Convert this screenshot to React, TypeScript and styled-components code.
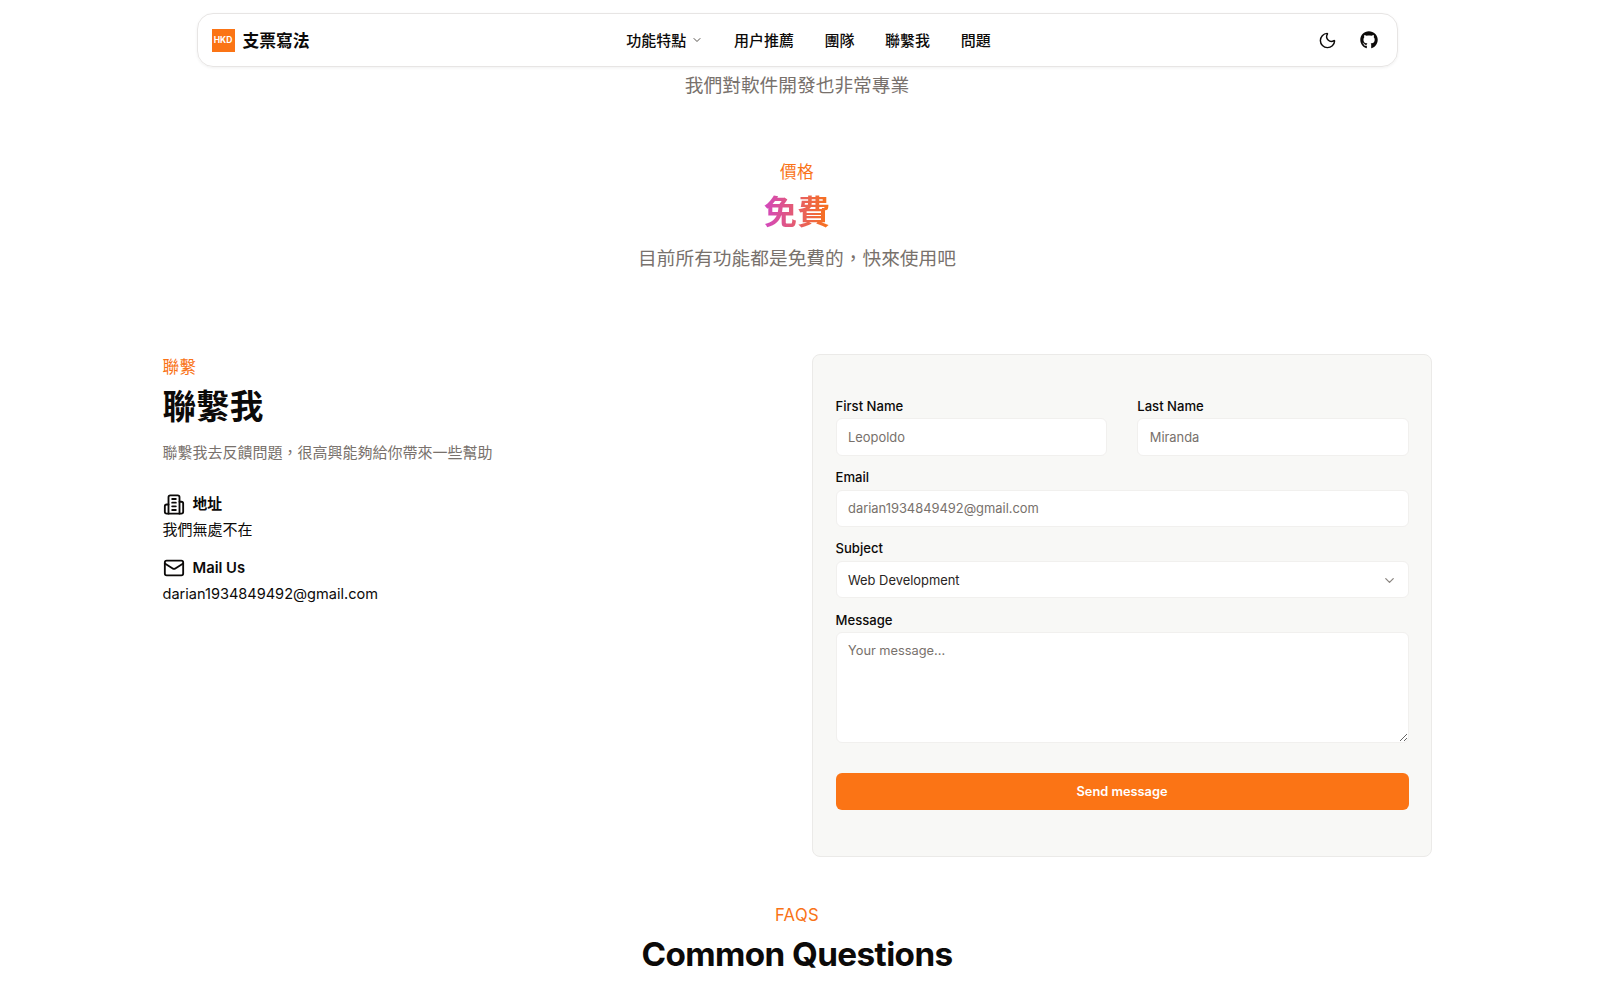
import styled, { createGlobalStyle } from 'styled-components'
import { ReactElement } from 'react'
import { ChevronDown, Mail, Moon } from 'lucide-react'
import { FaGithub } from 'react-icons/fa'

const latin = `Inter, 'Noto Sans CJK TC', sans-serif`

const GlobalStyle = createGlobalStyle`
  html, body {
    margin: 0;
    padding: 0;
    height: 993px;
    overflow: hidden;
    background: #ffffff;
    font-family: ${latin};
    color: #0c0a09;
  }
  * { box-sizing: border-box; }
`

const Page = styled.div`
  width: 1594px;
  padding-top: 13px;
  display: flex;
  flex-direction: column;
  align-items: center;
`

const Nav = styled.nav`
  width: 1201px;
  height: 54px;
  border: 1px solid #e7e5e4;
  border-radius: 16px;
  box-shadow: 0 1px 3px rgba(12, 10, 9, 0.06);
  display: grid;
  grid-template-columns: 1fr auto 1fr;
  align-items: center;
  padding: 0 19px 0 14px;
`

const Brand = styled.div`
  display: flex;
  align-items: center;
  gap: 8px;
  font-size: 16.8px;
  font-weight: 700;
`

const BrandName = styled.span`
  padding-bottom: 1px;
`

const Logo = styled.div`
  width: 23px;
  height: 23px;
  background: #fb7415;
  color: #ffffff;
  font-size: 8.5px;
  font-weight: 700;
  display: flex;
  align-items: center;
  justify-content: center;
`

const Links = styled.div`
  display: flex;
  align-items: center;
  gap: 30.6px;
  margin-left: 28px;
`

const NavLink = styled.a`
  font-size: 15px;
  font-weight: 500;
  display: flex;
  align-items: center;
  gap: 5px;
  padding-bottom: 2px;
  svg {
    margin-top: 2px;
  }
`

const NavTools = styled.div`
  display: flex;
  justify-content: flex-end;
  align-items: center;
  gap: 23px;
`

const Lead = styled.p<{ $top?: number }>`
  margin: ${({ $top }) => $top ?? 0}px 0 0;
  font-size: 18.72px;
  line-height: 28px;
  color: #78716c;
  text-align: center;
`

const Eyebrow = styled.div`
  font-size: 16.64px;
  line-height: 25px;
  letter-spacing: 0.4px;
  color: #f97316;
`

const Pricing = styled.section`
  margin-top: 60px;
  display: flex;
  flex-direction: column;
  align-items: center;
`

const Free = styled.h2`
  margin: 7px 0 0;
  font-size: 33.28px;
  line-height: 40px;
  font-weight: 700;
  background: linear-gradient(to right, #d247bf, #f97316);
  -webkit-background-clip: text;
  background-clip: text;
  color: transparent;
`

const Contact = styled.section`
  width: 1269px;
  margin-top: 81px;
  display: grid;
  grid-template-columns: 649px 620px;
`

const ContactInfo = styled.div`
  padding-top: 1px;
`

const ContactTitle = styled.h2`
  margin: 7px 0 0;
  font-size: 33.6px;
  line-height: 40px;
  font-weight: 700;
`

const ContactLead = styled.p`
  margin: 14px 0 0;
  font-size: 15px;
  line-height: 23px;
  color: #78716c;
`

const InfoList = styled.div`
  margin-top: 27px;
  display: flex;
  flex-direction: column;
  gap: 12px;
`

const InfoHead = styled.div`
  display: flex;
  align-items: center;
  gap: 8px;
  font-size: 14.8px;
  line-height: 26px;
  font-weight: 600;
`

const InfoText = styled.div<{ $latin?: boolean }>`
  font-size: ${({ $latin }) => ($latin ? 14.56 : 15)}px;
  line-height: 26px;
`

const Card = styled.form`
  height: 503px;
  background: #f8f8f6;
  border: 1px solid #ebeae8;
  border-radius: 8px;
  padding: 42.5px 22px 0 23px;
  display: flex;
  flex-direction: column;
`

const Row = styled.div`
  display: grid;
  grid-template-columns: 1fr 1fr;
  gap: 30.5px;
`

const Field = styled.label<{ $spaced?: boolean }>`
  display: block;
  margin-top: ${({ $spaced }) => ($spaced ? 13.2 : 0)}px;
`

const FieldLabel = styled.div`
  font-size: 13.1px;
  line-height: 16px;
  font-weight: 500;
  margin-bottom: 4.8px;
`

const Input = styled.input`
  display: block;
  width: 100%;
  height: 37.4px;
  padding: 1px 11.5px 0;
  border: 1px solid #f1f0ee;
  border-radius: 6px;
  background: #ffffff;
  font-family: inherit;
  font-size: 12.9px;
  color: #0c0a09;
  outline: none;
  &::placeholder {
    color: #78716c;
  }
`

const SelectBox = styled.div`
  height: 37.4px;
  padding: 1px 11px 0 11.5px;
  border: 1px solid #f1f0ee;
  border-radius: 6px;
  background: #ffffff;
  font-size: 12.9px;
  display: flex;
  align-items: center;
  justify-content: space-between;
  color: #292524;
`

const TextArea = styled.textarea`
  display: block;
  width: 100%;
  height: 110.5px;
  padding: 9px 11.5px;
  border: 1px solid #f1f0ee;
  border-radius: 6px;
  background: #ffffff;
  font-family: inherit;
  font-size: 12.8px;
  line-height: 18px;
  outline: none;
  resize: vertical;
  &::placeholder {
    color: #78716c;
  }
`

const Send = styled.button`
  margin-top: 30px;
  height: 37.4px;
  width: 100%;
  border: 0;
  border-radius: 6px;
  background: #fb7415;
  color: #ffffff;
  font-family: inherit;
  font-size: 12.8px;
  font-weight: 600;
`

const Faq = styled.section`
  margin-top: 46px;
  display: flex;
  flex-direction: column;
  align-items: center;
`

const FaqTitle = styled.h2`
  margin: 6px 0 0;
  font-size: 33.28px;
  line-height: 40px;
  letter-spacing: -0.6px;
  font-weight: 700;
`

// lucide dropped this version of the building icon, so it is drawn here
const BuildingIcon = (): ReactElement => (
  <svg
    width="22"
    height="23"
    viewBox="0 0 24 24"
    fill="none"
    stroke="currentColor"
    strokeWidth="2"
    strokeLinecap="round"
    strokeLinejoin="round"
  >
    <path d="M6 22V4a2 2 0 0 1 2-2h8a2 2 0 0 1 2 2v18Z" />
    <path d="M6 12H4a2 2 0 0 0-2 2v6a2 2 0 0 0 2 2h2" />
    <path d="M18 9h2a2 2 0 0 1 2 2v9a2 2 0 0 1-2 2h-2" />
    <path d="M10 6h4" />
    <path d="M10 10h4" />
    <path d="M10 14h4" />
    <path d="M10 18h4" />
  </svg>
)

// full-width comma, written as an escape so it stays the CJK glyph
const pricingLead = '目前所有功能都是免費的\uFF0C快來使用吧'
const contactLead = '聯繫我去反饋問題\uFF0C很高興能夠給你帶來一些幫助'

export default function App(): ReactElement {
  return (
    <Page>
      <GlobalStyle />
      <Nav>
        <Brand>
          <Logo>HKD</Logo>
          <BrandName>支票寫法</BrandName>
        </Brand>
        <Links>
          <NavLink>
            功能特點
            <ChevronDown size={12} color="#57534e" />
          </NavLink>
          <NavLink>用户推薦</NavLink>
          <NavLink>團隊</NavLink>
          <NavLink>聯繫我</NavLink>
          <NavLink>問題</NavLink>
        </Links>
        <NavTools>
          <Moon size={19} strokeWidth={1.8} />
          <FaGithub size={18} />
        </NavTools>
      </Nav>
      <Lead $top={5}>我們對軟件開發也非常專業</Lead>

      <Pricing>
        <Eyebrow>價格</Eyebrow>
        <Free>免費</Free>
        <Lead $top={13}>{pricingLead}</Lead>
      </Pricing>

      <Contact>
        <ContactInfo>
          <Eyebrow>聯繫</Eyebrow>
          <ContactTitle>聯繫我</ContactTitle>
          <ContactLead>{contactLead}</ContactLead>
          <InfoList>
            <div>
              <InfoHead>
                <BuildingIcon />
                地址
              </InfoHead>
              <InfoText>我們無處不在</InfoText>
            </div>
            <div>
              <InfoHead>
                <Mail size={22} strokeWidth={2} />
                Mail Us
              </InfoHead>
              <InfoText $latin>darian1934849492@gmail.com</InfoText>
            </div>
          </InfoList>
        </ContactInfo>
        <Card>
          <Row>
            <Field>
              <FieldLabel>First Name</FieldLabel>
              <Input placeholder="Leopoldo" />
            </Field>
            <Field>
              <FieldLabel>Last Name</FieldLabel>
              <Input placeholder="Miranda" />
            </Field>
          </Row>
          <Field $spaced>
            <FieldLabel>Email</FieldLabel>
            <Input placeholder="darian1934849492@gmail.com" />
          </Field>
          <Field $spaced>
            <FieldLabel>Subject</FieldLabel>
            <SelectBox>
              Web Development
              <ChevronDown size={15} color="#8a8580" />
            </SelectBox>
          </Field>
          <Field $spaced>
            <FieldLabel>Message</FieldLabel>
            <TextArea placeholder="Your message..." />
          </Field>
          <Send type="button">Send message</Send>
        </Card>
      </Contact>

      <Faq>
        <Eyebrow>FAQS</Eyebrow>
        <FaqTitle>Common Questions</FaqTitle>
      </Faq>
    </Page>
  )
}
